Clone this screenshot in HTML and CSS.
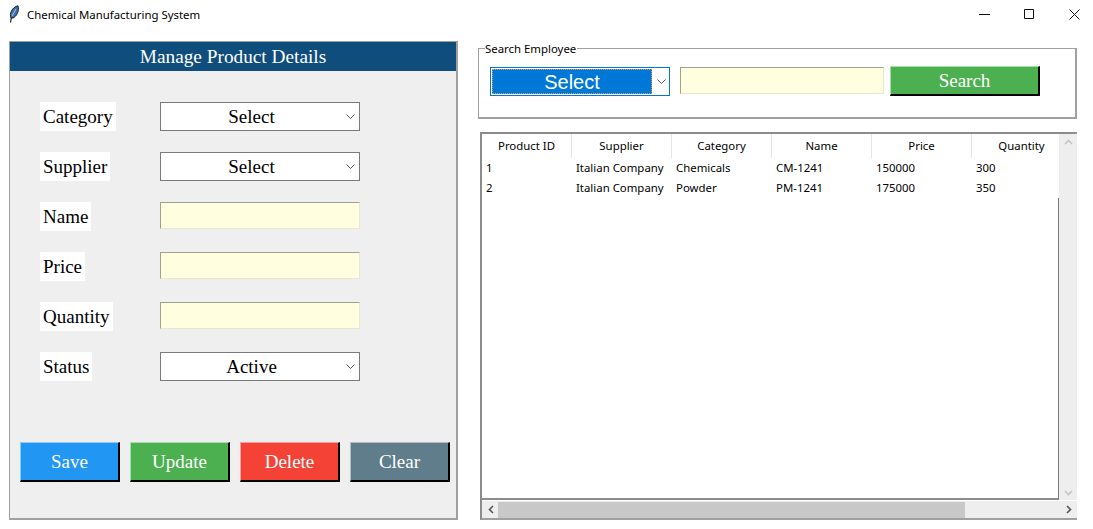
FILE: index.html

```html
<!DOCTYPE html>
<html lang='en-US'>
	<head>
		<title>Chemical Manufacturing System</title>
		<meta charset='utf-8'>
		<link rel="stylesheet" href="styles.css">
	</head>
	<body>
		<header class='titlebar'>
			<svg class='feather' width='12' height='18' viewBox='0 0 12 18'>
				<path d='M2.500 17.500 L3.500 12' stroke='#111' stroke-width='1.100' fill='none'/>
				<path d='M3 13 C1 9 4 2 10 .8 C11.500 6 8.500 11.500 5 13 Z' fill='#3f6ea8' stroke='#16202e' stroke-width='1'/>
				<path d='M4 11 L8 4' stroke='#a8c8ea' stroke-width='1' fill='none'/>
			</svg>
			<span class='app-name'>Chemical Manufacturing System</span>
			<div class='window-controls'>
				<svg width='11' height='11' viewBox='0 0 11 11'><path d='M0 5.500H11' stroke='#111'/></svg>
				<svg width='11' height='11' viewBox='0 0 11 11'><path d='M.5 .5H9.500V9.500H.5Z' stroke='#111' fill='none'/></svg>
				<svg width='11' height='11' viewBox='0 0 11 11'><path d='M.5 .5L10.500 10.500M10.500 .5L.5 10.500' stroke='#111' fill='none'/></svg>
			</div>
		</header>
		<main class='content'>
			<section class='details'>
				<h1 class='details-title'>Manage Product Details</h1>
				<form class='fields'>
					<div class='field'>
						<label class='field-label'>Category</label>
						<div class='combo'><span class='combo-text'>Select</span><svg class='chevron' width='9' height='5' viewBox='0 0 9 5'><path d='M.5 .5L4.500 4.500L8.500 .5' stroke='#555' fill='none'/></svg></div>
					</div>
					<div class='field'>
						<label class='field-label'>Supplier</label>
						<div class='combo'><span class='combo-text'>Select</span><svg class='chevron' width='9' height='5' viewBox='0 0 9 5'><path d='M.5 .5L4.500 4.500L8.500 .5' stroke='#555' fill='none'/></svg></div>
					</div>
					<div class='field'>
						<label class='field-label'>Name</label>
						<input class='entry' type='text'>
					</div>
					<div class='field'>
						<label class='field-label'>Price</label>
						<input class='entry' type='text'>
					</div>
					<div class='field'>
						<label class='field-label'>Quantity</label>
						<input class='entry' type='text'>
					</div>
					<div class='field'>
						<label class='field-label'>Status</label>
						<div class='combo'><span class='combo-text'>Active</span><svg class='chevron' width='9' height='5' viewBox='0 0 9 5'><path d='M.5 .5L4.500 4.500L8.500 .5' stroke='#555' fill='none'/></svg></div>
					</div>
				</form>
				<div class='actions'>
					<button class='btn btn-blue' type='button'>Save</button>
					<button class='btn btn-green' type='button'>Update</button>
					<button class='btn btn-red' type='button'>Delete</button>
					<button class='btn btn-slate' type='button'>Clear</button>
				</div>
			</section>
			<div class='side'>
				<fieldset class='search'>
					<legend class='search-legend'>Search Employee</legend>
					<div class='combo combo-focus'>
						<span class='combo-selected'>Select</span>
						<svg class='chevron' width='9' height='5' viewBox='0 0 9 5'><path d='M.5 .5L4.500 4.500L8.500 .5' stroke='#555' fill='none'/></svg>
					</div>
					<input class='entry entry-search' type='text'>
					<button class='btn btn-green btn-search' type='button'>Search</button>
				</fieldset>
				<div class='grid-frame'>
					<div class='tree'>
						<div class='tree-clip'>
							<table class='rows'>
								<colgroup>
									<col class='col-id'><col class='col'><col class='col'><col class='col'><col class='col'><col class='col'>
								</colgroup>
								<thead>
									<tr><th>Product ID</th><th>Supplier</th><th>Category</th><th>Name</th><th>Price</th><th>Quantity</th></tr>
								</thead>
								<tbody>
									<tr><td>1</td><td>Italian Company</td><td>Chemicals</td><td>CM-1241</td><td>150000</td><td>300</td></tr>
									<tr><td>2</td><td>Italian Company</td><td>Powder</td><td>PM-1241</td><td>175000</td><td>350</td></tr>
								</tbody>
							</table>
						</div>
					</div>
					<div class='vscroll'>
						<svg width='9' height='6' viewBox='0 0 9 6'><path d='M1 5L4.500 1.500L8 5' stroke='#c4c4c4' stroke-width='1.600' fill='none'/></svg>
						<svg width='9' height='6' viewBox='0 0 9 6'><path d='M1 1L4.500 4.500L8 1' stroke='#c4c4c4' stroke-width='1.600' fill='none'/></svg>
					</div>
					<div class='hscroll'>
						<svg class='hscroll-arrow' width='6' height='9' viewBox='0 0 6 9'><path d='M5 1L1.500 4.500L5 8' stroke='#555' stroke-width='1.600' fill='none'/></svg>
						<div class='hscroll-track'><div class='hscroll-thumb'></div></div>
						<svg class='hscroll-arrow' width='6' height='9' viewBox='0 0 6 9'><path d='M1 1L4.500 4.500L1 8' stroke='#555' stroke-width='1.600' fill='none'/></svg>
					</div>
				</div>
			</div>
		</main>
	</body>
</html>
```

FILE: styles.css

```css
html,body{
	margin:0;
	height:100%;
}

*{
	box-sizing:border-box;
}

body{
	background:#fff;
	color:#000;
	font-family:'Noto Sans',sans-serif;
	font-size:11.4px;
	overflow:hidden;
}

.titlebar{
	display:flex;
	align-items:center;
	height:30px;
	padding:0 13px 2px 8px;
}

.feather{
	flex:none;
}

.app-name{
	margin-left:7px;
}

.window-controls{
	display:flex;
	align-items:center;
	gap:34px;
	margin-left:auto;
}

.content{
	display:flex;
	align-items:flex-start;
	padding:11px 0 0 9px;
}

.details{
	width:449px;
	height:479px;
	background:#efefef;
	border:1px solid #a0a0a0;
	border-right-width:2px;
	border-bottom-width:2px;
}

.details-title{
	margin:0;
	height:29px;
	background:#0f4d7d;
	color:#fff;
	font:normal 19.3px/29px 'Liberation Serif',serif;
	text-align:center;
}

.fields{
	display:flex;
	flex-direction:column;
	gap:21px;
	padding:31px 0 0 30px;
}

.field{
	display:flex;
	align-items:flex-start;
	height:29px;
}

.field-label{
	margin-right:auto;
	padding:0 3px;
	background:#fff;
	font:19px/29px 'Liberation Serif',serif;
}

.field .combo,.field .entry{
	margin-right:96px;
}

.combo{
	display:flex;
	align-items:center;
	flex:none;
	width:200px;
	height:29px;
	background:#fff;
	border:1px solid #7a7a7a;
}

.combo-text{
	flex:1;
	padding-left:1px;
	text-align:center;
	font:19px/27px 'Liberation Serif',serif;
}

.chevron{
	flex:none;
	margin:0 4px 0 5px;
}

.entry{
	flex:none;
	width:200px;
	height:27px;
	padding:0 4px;
	background:#ffffe0;
	border:1px solid;
	border-color:#a0a090 #e8e8d0 #e8e8d0 #a0a090;
	border-radius:0;
	outline:none;
}

.actions{
	display:flex;
	gap:10px;
	padding:61px 0 0 10px;
}

.btn{
	width:100px;
	height:40px;
	padding:0;
	color:#fff;
	font:19px 'Liberation Serif',serif;
	border-style:solid;
	border-width:1px 2px 2px 1px;
	cursor:pointer;
}

.btn-blue{
	background:#2196f3;
	border-color:#8ccbf9 #000 #000 #8ccbf9;
}

.btn-green{
	background:#4caf50;
	border-color:#a6e0a8 #000 #000 #a6e0a8;
}

.btn-red{
	background:#f44336;
	border-color:#faa19a #000 #000 #faa19a;
}

.btn-slate{
	background:#607d8b;
	border-color:#afbec5 #000 #000 #afbec5;
}

.side{
	flex:none;
	width:599px;
	margin-left:20px;
}

.search{
	display:flex;
	align-items:flex-start;
	min-inline-size:0;
	width:599px;
	height:78px;
	margin:0;
	padding:11px 0 0 11px;
	border:1px solid #a0a0a0;
	border-bottom-width:2px;
	border-right-width:2px;
}

.search-legend{
	margin-left:-5px;
	padding:1px 1px 0 0;
	line-height:14px;
}

.combo-focus{
	width:180px;
	padding:1px;
	border-color:#0078d7;
}

.combo-selected{
	flex:none;
	width:160px;
	height:25px;
	background:#0078d7;
	color:#fff;
	border:1px dotted #e09a48;
	text-align:center;
	font:20px/25px 'Liberation Sans',sans-serif;
}

.entry-search{
	width:204px;
	margin-left:10px;
}

.btn-search{
	width:150px;
	height:30px;
	margin:-1px 0 0 6px;
}

.grid-frame{
	display:grid;
	grid-template-columns:577px 18px;
	grid-template-rows:366px 18px;
	width:597px;
	height:388px;
	margin:13px 0 0 2px;
	border:2px solid #a0a0a0;
	border-left-color:#8c8c8c;
	border-top-color:#8c8c8c;
}

.tree{
	border-right:1px solid #7a7a7a;
	border-bottom:2px solid #8c8c8c;
}

.tree-clip{
	width:577px;
	overflow:hidden;
	background:#fff;
}

.rows{
	table-layout:fixed;
	width:590px;
	border-collapse:separate;
	border-spacing:0;
}

.col-id{
	width:90px;
}

.col{
	width:100px;
}

.rows th{
	height:24px;
	padding:0 0 2px;
	font-weight:normal;
	text-align:center;
	border-right:1px solid #e5e5e5;
}

.rows td{
	height:20px;
	padding:0 0 2px 4px;
	white-space:nowrap;
}

.vscroll{
	display:flex;
	flex-direction:column;
	justify-content:space-between;
	align-items:center;
	padding:5px 0 4px;
	background:#eee;
}

.hscroll{
	grid-column:1 / 3;
	display:flex;
	align-items:center;
	padding:0 5px 0 6px;
	background:#eee;
	border-top:1px solid #fff;
}

.hscroll-track{
	flex:1;
	height:16px;
	margin:0 5px 0 4px;
}

.hscroll-thumb{
	width:467px;
	height:100%;
	background:#c8c8c8;
}
```
